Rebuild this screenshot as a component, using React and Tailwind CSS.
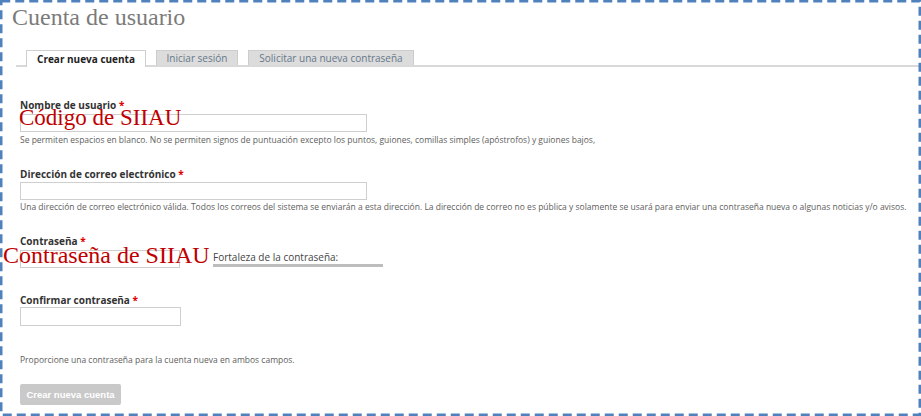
import React from "react";

function Label({ children }) {
  return (
    <div className="text-[10px] font-bold leading-[14px] text-[#333]">
      {children} <span className="text-[#e00000]">*</span>
    </div>
  );
}

export default function App() {
  return (
    <div className="relative w-[921px] h-[416px] bg-white overflow-hidden font-['Open_Sans',sans-serif]">
      <h1 className="pt-[3px] pl-[12px] font-['Liberation_Serif',serif] text-[24px] leading-[28px] font-normal text-[#7b7b7b]">
        Cuenta de usuario
      </h1>

      <div className="mt-[19px] ml-[16px] mr-[2px] flex items-end gap-[10px] pl-[10px] border-b-2 border-[#d9d9d9]">
        <div className="relative z-10 -mb-[2px] h-[17px] w-[120px] bg-white border border-b-0 border-[#cfcfcf] flex justify-center pt-[1px] text-[10px] font-bold leading-[14px] text-[#222]">
          Crear nueva cuenta
        </div>
        <div className="h-[15px] w-[82px] bg-[#dcdcdc] border border-b-0 border-[#cdcdcd] flex justify-center text-[10px] leading-[14px] text-[#65788a]">
          Iniciar sesión
        </div>
        <div className="h-[15px] w-[166px] bg-[#dcdcdc] border border-b-0 border-[#cdcdcd] flex justify-center text-[10px] leading-[14px] text-[#65788a]">
          Solicitar una nueva contraseña
        </div>
      </div>

      <form className="pl-[20px] flex flex-col items-start">
        <div className="mt-[31px]">
          <Label>Nombre de usuario</Label>
        </div>
        <div className="relative mt-[2px]">
          <div className="w-[347px] h-[18px] border border-[#cfcfcf] bg-white" />
          <span className="absolute left-[-1px] top-[-8px] whitespace-nowrap font-['Liberation_Serif',serif] text-[23px] leading-[23px] text-[#c00000]">
            Código de SIIAU
          </span>
        </div>
        <p className="mt-[1px] text-[8.5px] leading-[13px] text-[#5e5e5e] whitespace-nowrap">
          Se permiten espacios en blanco. No se permiten signos de puntuación excepto los puntos, guiones, comillas simples (apóstrofos) y guiones bajos,
        </p>

        <div className="mt-[21px]">
          <Label>Dirección de correo electrónico</Label>
        </div>
        <div className="mt-[1px] w-[347px] h-[18px] border border-[#cfcfcf] bg-white" />
        <p className="text-[8.5px] leading-[13px] text-[#5e5e5e] whitespace-nowrap">
          Una dirección de correo electrónico válida. Todos los correos del sistema se enviarán a esta dirección. La dirección de correo no es pública y solamente se usará para enviar una contraseña nueva o algunas noticias y/o avisos.
        </p>

        <div className="mt-[21px]">
          <Label>Contraseña</Label>
        </div>
        <div className="mt-[2px] flex items-end gap-[33px]">
          <div className="relative">
            <div className="w-[160px] h-[18px] border border-[#cfcfcf] bg-white" />
            <span className="absolute left-[-17px] top-[-7px] whitespace-nowrap font-['Liberation_Serif',serif] text-[24px] leading-[24px] text-[#c00000]">
              Contraseña de SIIAU
            </span>
          </div>
          <div className="w-[170px] pb-[1px]">
            <div className="text-[10px] leading-[12px] text-[#444]">Fortaleza de la contraseña:</div>
            <div className="mt-[1px] h-[3px] bg-[#bdbdbd]" />
          </div>
        </div>

        <div className="mt-[25px]">
          <Label>Confirmar contraseña</Label>
        </div>
        <div className="w-[161px] h-[19px] border border-[#cfcfcf] bg-white" />

        <p className="mt-[27px] text-[8.5px] leading-[13px] text-[#5e5e5e]">
          Proporcione una contraseña para la cuenta nueva en ambos campos.
        </p>

        <button
          type="button"
          className="mt-[18px] w-[101px] h-[21px] rounded-[2px] bg-[#c9c9c9] text-white font-['Liberation_Sans',sans-serif] font-bold text-[9.5px] leading-[21px]"
        >
          Crear nueva cuenta
        </button>
      </form>

      <svg
        className="absolute inset-0 pointer-events-none"
        width="921"
        height="416"
        viewBox="0 0 921 416"
      >
        <rect
          x="1.25"
          y="1.25"
          width="918.5"
          height="413.5"
          fill="none"
          stroke="#4f81bd"
          strokeWidth="2.5"
          strokeDasharray="9 5"
        />
      </svg>
    </div>
  );
}
